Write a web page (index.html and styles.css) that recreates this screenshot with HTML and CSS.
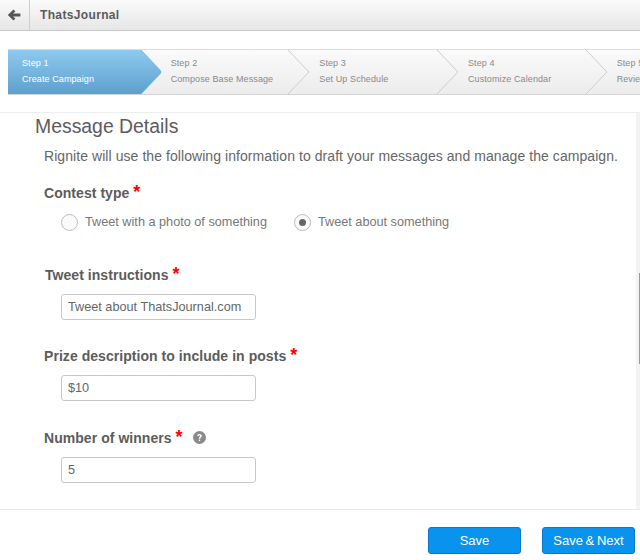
FILE: index.html
```html
<!DOCTYPE html>
<html lang="en">
<head>
<meta charset="utf-8">
<title>ThatsJournal</title>
<link rel="stylesheet" href="styles.css">
</head>
<body>
<header class="topbar">
  <div class="back">
    <svg width="14" height="12" viewBox="0 0 14 12"><path d="M6.5 0.6 L8.4 2.5 L6 4.6 H13.4 V7.4 H6 L8.4 9.5 L6.5 11.4 L0.8 6 Z" fill="#555"/></svg>
  </div>
  <div class="brand">ThatsJournal</div>
</header>
<nav class="stepper">
  <div class="step active">
    <div class="step-num">Step 1</div><div class="step-name">Create Campaign</div>
    <svg class="tip" width="22" height="46" viewBox="0 0 22 46"><path d="M0 0 L20.5 21.5 Q21.5 23 20.5 24.5 L0 46 Z" fill="url(#blue)"/><path d="M0 0 L20.5 21.5 Q21.5 23 20.5 24.5 L0 46" fill="none" stroke="#6fb0dc" stroke-width="0.8"/><defs><linearGradient id="blue" x1="0" y1="0" x2="0" y2="1"><stop offset="0" stop-color="#8fcbf0"/><stop offset="1" stop-color="#5c9fcc"/></linearGradient></defs></svg>
  </div>
  <div class="step">
    <div class="step-num">Step 2</div><div class="step-name">Compose Base Message</div>
    <svg class="tip" width="22" height="46" viewBox="0 0 22 46"><path d="M0 1 L21 23 L0 45" fill="none" stroke="#ccc"/></svg>
  </div>
  <div class="step">
    <div class="step-num">Step 3</div><div class="step-name">Set Up Schedule</div>
    <svg class="tip" width="22" height="46" viewBox="0 0 22 46"><path d="M0 1 L21 23 L0 45" fill="none" stroke="#ccc"/></svg>
  </div>
  <div class="step">
    <div class="step-num">Step 4</div><div class="step-name">Customize Calendar</div>
    <svg class="tip" width="22" height="46" viewBox="0 0 22 46"><path d="M0 1 L21 23 L0 45" fill="none" stroke="#ccc"/></svg>
  </div>
  <div class="step">
    <div class="step-num">Step 5</div><div class="step-name">Review</div>
  </div>
</nav>
<main class="panel">
  <div class="scrolltrack"><div class="scrollthumb"></div></div>
  <h1 class="title">Message Details</h1>
  <p class="intro">Rignite will use the following information to draft your messages and manage the campaign.</p>
  <section class="field f-contest">
    <div class="label">Contest type <span class="req">*</span></div>
    <div class="radios">
      <div class="radio"><span class="dot"></span>Tweet with a photo of something</div>
      <div class="radio"><span class="dot on"></span>Tweet about something</div>
    </div>
  </section>
  <section class="field f-tweet">
    <div class="label">Tweet instructions <span class="req">*</span></div>
    <input class="text" type="text" value="Tweet about ThatsJournal.com">
  </section>
  <section class="field f-prize">
    <div class="label">Prize description to include in posts <span class="req">*</span></div>
    <input class="text" type="text" value="$10">
  </section>
  <section class="field f-winners">
    <div class="label">Number of winners <span class="req">*</span>
      <svg class="help" width="13" height="13" viewBox="0 0 13 13"><circle cx="6.5" cy="6.5" r="6.5" fill="#8a8a8a"/><path d="M4.3 5 C4.4 3.6 5.3 3 6.5 3 C7.8 3 8.8 3.8 8.8 4.9 C8.8 6.3 7.2 6.3 7.2 7.7 H5.8 C5.8 5.8 7.2 5.8 7.2 4.9 C7.2 4.5 6.9 4.3 6.5 4.3 C6 4.3 5.8 4.6 5.7 5 Z M5.8 8.4 H7.2 V9.9 H5.8 Z" fill="#fff"/></svg>
    </div>
    <input class="text" type="text" value="5">
  </section>
</main>
<footer class="actions">
  <button class="btn" type="button">Save</button>
  <button class="btn" type="button">Save &amp; Next</button>
</footer>
</body>
</html>
```
FILE: styles.css
```css
* { box-sizing: border-box; }
html, body { margin: 0; padding: 0; }
body {
  width: 640px; height: 560px; overflow: hidden; background: #fff;
  font-family: "Liberation Sans", Arial, sans-serif; color: #666;
}
.topbar {
  height: 31px; display: flex; align-items: stretch;
  background: linear-gradient(#fbfbfb, #e6e6e6);
  border-bottom: 1px solid #c9c9c9;
}
.back {
  width: 30px; display: flex; align-items: center; justify-content: center;
  border-right: 1px solid #cfcfcf; padding-right: 2px;
}
.brand {
  padding-left: 10px; line-height: 30px; font-size: 12px; font-weight: bold;
  color: #5a5a5a; letter-spacing: 0.35px;
}
.stepper {
  margin: 18px 0 0 8px; height: 46px; display: flex; overflow: hidden;
  background: linear-gradient(#fafafa, #ececec);
  border-top: 1px solid #dcdcdc; border-bottom: 1px solid #d4d4d4;
}
.step {
  position: relative; flex: 0 0 148.67px; padding: 5px 0 0 14px;
  font-size: 9px; line-height: 16px; color: #8a8a8a; letter-spacing: 0.1px;
}
.step .tip { position: absolute; left: 131.67px; top: -1px; z-index: 1; }
.step.active {
  flex-basis: 131.67px; margin-right: 17px; color: #fff; border-radius: 2px 0 0 2px;
  background: linear-gradient(#8fcbf0, #5c9fcc);
  margin-top: -1px; margin-bottom: -1px; padding-top: 6px;
}
.step.active .tip { top: 0; }
.panel {
  position: relative; height: 398px; margin-top: 17px;
  border-top: 1px solid #eee; border-bottom: 1px solid #e8e8e8;
  padding: 2px 0 0 35px;
}
.scrolltrack { position: absolute; right: 0; top: 0; bottom: 0; width: 4px; background: #f3f3f3; }
.scrollthumb { position: absolute; right: 0; top: 160px; width: 1px; height: 91px; background: #999; }
.title { margin: 0; font-size: 19.4px; font-weight: normal; line-height: 22px; color: #5c5c5c; }
.intro { margin: 10px 0 0 9px; font-size: 14px; line-height: 18px; color: #666; letter-spacing: 0.066px; }
.field { margin-left: 9px; }
.label { font-size: 14px; line-height: 18px; font-weight: bold; color: #5c5c5c; letter-spacing: 0.05px; }
.req { color: #f00; font-size: 18px; line-height: 14px; font-weight: bold; }
.f-contest { margin-top: 19px; }
.radios { display: flex; gap: 27px; margin: 11px 0 0 17px; }
.radio { display: flex; align-items: center; font-size: 12.7px; line-height: 18px; color: #777; }
.dot {
  width: 17px; height: 17px; margin-right: 7px; border-radius: 50%;
  border: 1px solid #bbb; background: #fafafa; display: flex; align-items: center; justify-content: center;
}
.dot.on::after { content: ""; width: 7px; height: 7px; border-radius: 50%; background: #666; }
.f-tweet { margin: 35px 0 0 10px; }
.f-tweet .text { margin-left: 16px; margin-top: 10px; }
.f-prize { margin-top: 27px; }
.f-winners { margin-top: 28px; }
.text {
  display: block; width: 195px; height: 26px; margin: 10px 0 0 17px; padding: 0 6px;
  border: 1px solid #c8c8c8; border-radius: 3px; background: #fff;
  font: 12.7px "Liberation Sans", Arial, sans-serif; color: #666;
}
.help { margin-left: 6px; vertical-align: -1px; }
.actions { display: flex; justify-content: flex-end; gap: 21px; padding: 17px 5px 0 0; }
.btn {
  width: 93px; height: 27px; padding: 0; border: 1px solid #0b78c8; border-radius: 3px;
  background: #0a93ee; color: #fff; font: 13px "Liberation Sans", Arial, sans-serif; word-spacing: -1px;
}
```
